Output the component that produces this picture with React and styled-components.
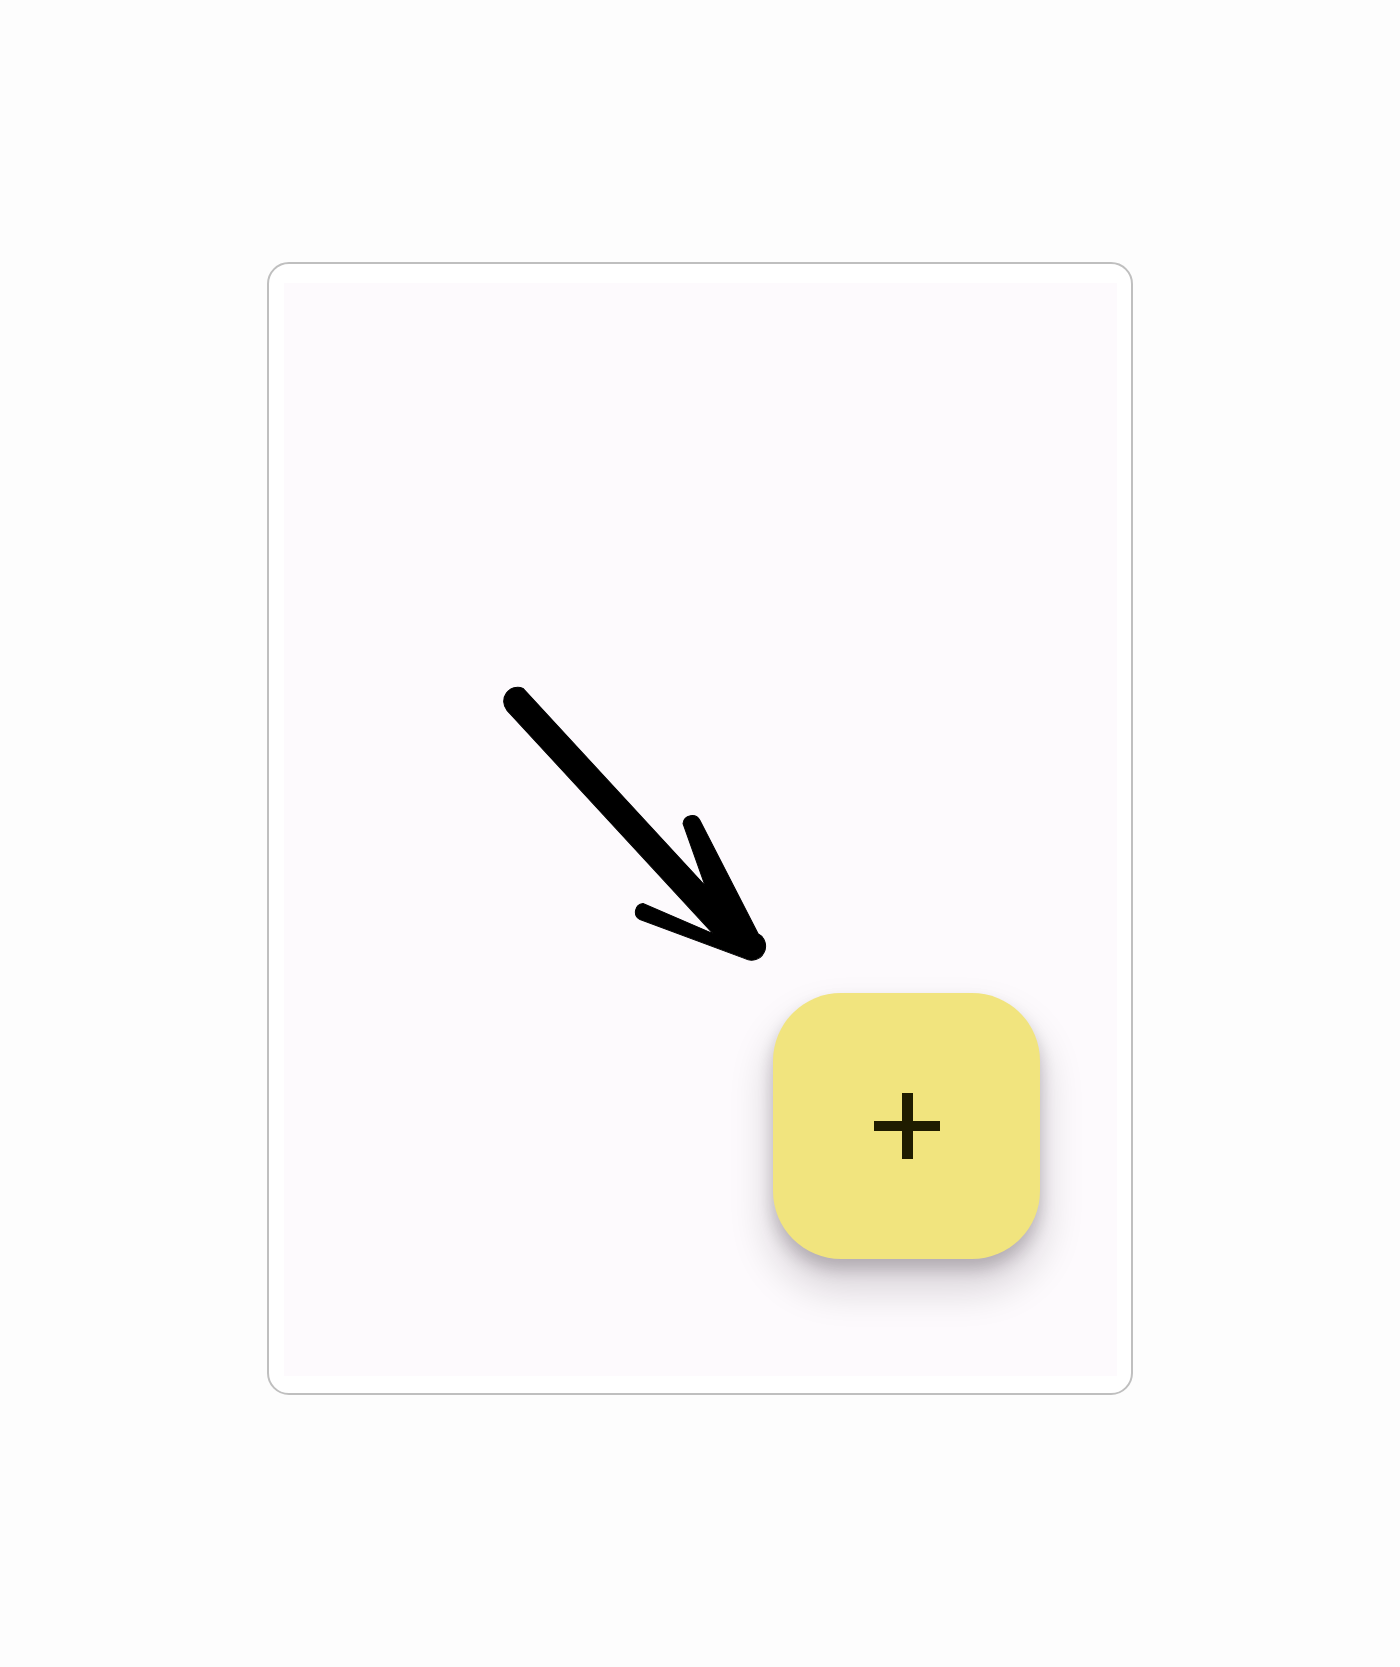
import React from 'react'
import styled, { createGlobalStyle } from 'styled-components'

const GlobalStyle = createGlobalStyle`
  html, body {
    margin: 0;
    padding: 0;
    background: #fdfdfd;
    font-family: Roboto, "Liberation Sans", sans-serif;
  }
`

const Page = styled.div`
  min-height: 1667px;
  display: flex;
  justify-content: center;
  align-items: flex-start;
  padding-top: 262px;
  box-sizing: border-box;
`

const Frame = styled.div`
  width: 866px;
  height: 1133px;
  box-sizing: border-box;
  border: 2px solid #bfbfbf;
  border-radius: 22px;
  background: #ffffff;
  padding: 19px 14px 17px 15px;
  display: flex;
`

const Screen = styled.div`
  position: relative;
  flex: 1;
  background: #fdfafd;
  display: flex;
  justify-content: flex-end;
  align-items: flex-end;
  padding: 0 77px 117px 0;
`

const Sketch = styled.svg`
  position: absolute;
  inset: 0;
  width: 100%;
  height: 100%;
  pointer-events: none;
`

const Fab = styled.button`
  width: 267px;
  height: 266px;
  border: none;
  border-radius: 68px;
  background: #f1e47e;
  display: flex;
  align-items: center;
  justify-content: center;
  padding: 0;
  cursor: pointer;
  box-shadow: 0 10px 16px rgba(20, 10, 20, 0.2), 0 26px 38px 6px rgba(20, 10, 20, 0.15);
`

function PlusIcon() {
  return (
    <svg width="66" height="66" viewBox="0 0 66 66">
      <rect x="0" y="28" width="66" height="10" fill="#1f1c00" />
      <rect x="28" y="0" width="11" height="66" fill="#1f1c00" />
    </svg>
  )
}

// hand drawn arrow pointing at the fab, in page coordinates
// one outline: shaft, lower barb, tip, upper barb
function Arrow() {
  return (
    <Sketch viewBox="284 283 833 1092" preserveAspectRatio="none">
      <path
        d="M507 710 L713 933 L643 903 A8.5 8.5 0 0 0 640 919 L745 958 A14 14 0 0 0 758 933 L700 820 A9 9 0 0 0 683 823 L705 885 L523 688 A14 14 0 0 0 507 710 Z"
        fill="#000"
        stroke="#000"
        strokeWidth="1"
        strokeLinejoin="round"
      />
    </Sketch>
  )
}

export default function App() {
  return (
    <>
      <GlobalStyle />
      <Page>
        <Frame>
          <Screen>
            <Arrow />
            <Fab aria-label="Add">
              <PlusIcon />
            </Fab>
          </Screen>
        </Frame>
      </Page>
    </>
  )
}
